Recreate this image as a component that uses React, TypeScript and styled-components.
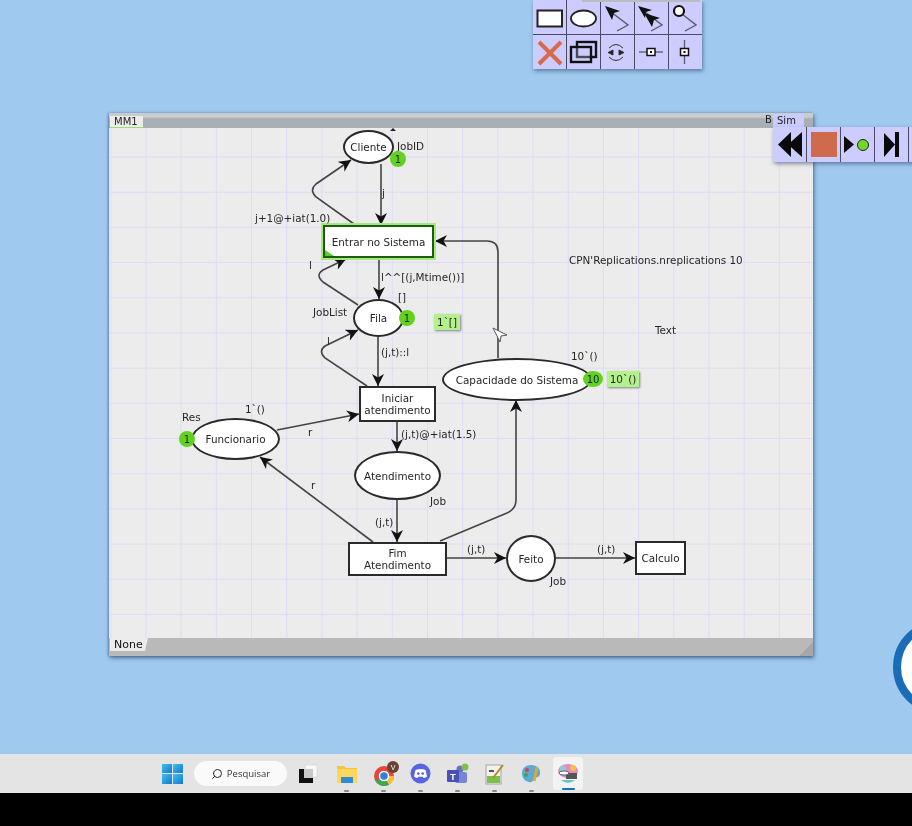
import React from "react";
import styled, { createGlobalStyle } from "styled-components";
import { Search } from "lucide-react";

// net coordinates below are screen pixels, the canvas starts here
const CANVAS_X = 109;
const CANVAS_Y = 128;

const GlobalStyle = createGlobalStyle`
  html, body { margin: 0; padding: 0; background: #000; }
  body { font-family: "DejaVu Sans", sans-serif; overflow: hidden; }
`;

const Screen = styled.div`
  width: 912px;
  height: 826px;
  display: flex;
  flex-direction: column;
  overflow: hidden;
  filter: blur(0.45px);
`;

const Desktop = styled.div`
  position: relative;
  flex: 1;
  background: #9fc9ef;
  overflow: hidden;
`;

const Palette = styled.div`
  position: absolute;
  background: #4a4a66;
  box-shadow: 1px 2px 4px rgba(40, 60, 100, 0.55);
`;

const ToolGrid = styled(Palette)`
  left: 533px;
  top: 0;
  display: grid;
  grid-template-columns: repeat(5, 33px);
  grid-template-rows: repeat(2, 34px);
  gap: 1px;
`;

const TopStrip = styled.div`
  position: absolute;
  left: 582px;
  top: 0;
  width: 118px;
  height: 2px;
  background: #b9bcc0;
`;

const Cell = styled.div`
  background: #ccccff;
  display: flex;
  svg {
    display: block;
  }
`;

const SimPalette = styled.div`
  position: absolute;
  left: 773px;
  top: 114px;
  z-index: 2;
`;

const SimTab = styled.div`
  width: 31px;
  height: 13px;
  background: #ccccff;
  border-radius: 2px 2px 0 0;
  font-size: 10px;
  line-height: 14px;
  padding-left: 4px;
  box-sizing: border-box;
  color: #222;
`;

const SimRow = styled(Palette)`
  position: static;
  display: grid;
  grid-template-columns: repeat(5, 33px);
  grid-template-rows: 35px;
  gap: 1px;
`;

const Window = styled.div`
  position: absolute;
  left: ${CANVAS_X}px;
  top: 113px;
  width: 704px;
  height: 543px;
  display: flex;
  flex-direction: column;
  box-shadow: 1px 2px 4px rgba(30, 60, 100, 0.65), -1px 0 2px rgba(30, 60, 100, 0.35);
`;

const TitleBar = styled.div`
  height: 15px;
  background: linear-gradient(#c8ccce 0 4px, #a7afb5 6px, #a9b0b5);
  display: flex;
  align-items: flex-end;
  padding-left: 1px;
  position: relative;
`;

const PageTab = styled.div`
  width: 33px;
  height: 12px;
  background: #ececec;
  border-bottom: 1px solid #9be06a;
  box-sizing: border-box;
  font-size: 10px;
  line-height: 11px;
  padding-left: 4px;
  color: #222;
`;

const BinderLetter = styled.span`
  position: absolute;
  left: 656px;
  top: 1px;
  font-size: 10px;
  color: #222;
`;

const Canvas = styled.div`
  position: relative;
  flex: 1;
  background-color: #ececec;
  background-image: linear-gradient(#dcdcf7 0 1.2px, transparent 1.2px),
    linear-gradient(90deg, #dcdcf7 0 1.2px, transparent 1.2px);
  background-size: 35.2px 35.2px;
  background-position: 36.5px 28.5px;
`;

const BottomBar = styled.div`
  height: 18px;
  background: #b9b9b9;
  display: flex;
  padding-left: 1px;
  position: relative;
  z-index: 1;
`;

const StatusTab = styled.div`
  width: 38px;
  height: 13px;
  background: #ececec;
  font-size: 11px;
  line-height: 14px;
  padding-left: 4px;
  box-sizing: border-box;
  color: #111;
  clip-path: polygon(0 0, 100% 0, 92% 100%, 0 100%);
`;

const ResizeCorner = styled.div`
  position: absolute;
  right: 0;
  bottom: 0;
  width: 14px;
  height: 14px;
  background: #a6a6a6;
  clip-path: polygon(100% 0, 100% 100%, 0 100%);
`;

const ArcLayer = styled.svg`
  position: absolute;
  left: 0;
  top: 0;
  z-index: 1;
  pointer-events: none;
`;

const Layer = styled.div`
  position: absolute;
  inset: 0;
  font-size: 10.4px;
  color: #262626;
`;

const Place = styled.div<{ $x: number; $y: number; $w: number; $h: number }>`
  position: absolute;
  left: ${(p) => p.$x - CANVAS_X}px;
  top: ${(p) => p.$y - CANVAS_Y}px;
  width: ${(p) => p.$w - p.$x}px;
  height: ${(p) => p.$h - p.$y}px;
  box-sizing: border-box;
  border-radius: 50%;
  border: 2px solid #2a2a2a;
  background: #fff;
  display: flex;
  align-items: center;
  justify-content: center;
  z-index: 2;
`;

const Transition = styled(Place)<{ $active?: boolean }>`
  border-radius: 0;
  text-align: center;
  line-height: 12px;
  border-color: ${(p) => (p.$active ? "#1f5c12" : "#2a2a2a")};
  box-shadow: ${(p) => (p.$active ? "0 0 0 2px #a4ea7c" : "none")};
`;

const EnabledCorner = styled.span`
  position: absolute;
  left: 0;
  bottom: 0;
  width: 9px;
  height: 6px;
  background: #5fc936;
  clip-path: polygon(0 0, 100% 100%, 0 100%);
`;

const Token = styled.div<{ $cx: number; $cy: number; $w?: number }>`
  position: absolute;
  left: ${(p) => p.$cx - CANVAS_X - (p.$w ?? 16) / 2}px;
  top: ${(p) => p.$cy - CANVAS_Y - 8}px;
  width: ${(p) => p.$w ?? 16}px;
  height: 16px;
  border-radius: 50%;
  background: #63d21f;
  display: flex;
  align-items: center;
  justify-content: center;
  font-size: 10px;
  color: #123;
  z-index: 3;
`;

const Marking = styled.div<{ $x: number; $y: number; $w: number }>`
  position: absolute;
  left: ${(p) => p.$x - CANVAS_X}px;
  top: ${(p) => p.$y - CANVAS_Y}px;
  width: ${(p) => p.$w}px;
  height: 16px;
  background: #b4f08c;
  box-shadow: 1px 1px 2px rgba(0, 0, 0, 0.45);
  display: flex;
  align-items: center;
  justify-content: center;
  z-index: 3;
`;

const Label = styled.span<{ $x: number; $y: number }>`
  position: absolute;
  left: ${(p) => p.$x - CANVAS_X}px;
  top: ${(p) => p.$y - CANVAS_Y - 7}px;
  line-height: 14px;
  white-space: nowrap;
  z-index: 2;
`;

const RingBadge = styled.div`
  position: absolute;
  left: 893px;
  top: 620px;
  width: 94px;
  height: 94px;
  box-sizing: border-box;
  border-radius: 50%;
  border: 8px solid #1b6cb6;
  background: #fff;
`;

const Taskbar = styled.div`
  height: 39px;
  background: #e4e4e4;
  display: flex;
  align-items: center;
  padding-left: 162px;
`;

const TaskIcons = styled.div`
  display: flex;
  align-items: center;
  margin-left: 2px;
`;

const TaskIcon = styled.div<{ $active?: boolean }>`
  position: relative;
  width: ${(p) => (p.$active ? 30 : 37)}px;
  height: ${(p) => (p.$active ? 33 : 39)}px;
  margin-left: ${(p) => (p.$active ? 3 : 0)}px;
  display: flex;
  align-items: center;
  justify-content: center;
  flex: none;
  border-radius: 3px;
  background: ${(p) => (p.$active ? "#f3f3f3" : "transparent")};
`;

const RunDot = styled.span<{ $active?: boolean }>`
  position: absolute;
  left: 50%;
  bottom: ${(p) => (p.$active ? 0 : 1)}px;
  width: ${(p) => (p.$active ? 13 : 5)}px;
  height: 2px;
  margin-left: ${(p) => (p.$active ? -6.5 : -2.5)}px;
  border-radius: 1px;
  background: ${(p) => (p.$active ? "#1173c4" : "#8a8a8a")};
`;

const StartButton = styled.div`
  width: 21px;
  height: 20px;
  display: grid;
  grid-template-columns: 1fr 1fr;
  gap: 1px;
  flex: none;
  margin-right: 11px;
  span {
    background: linear-gradient(135deg, #3fc0ee, #1579c9);
  }
`;

const SearchPill = styled.div`
  width: 93px;
  height: 25px;
  border-radius: 13px;
  background: #fafafa;
  display: flex;
  align-items: center;
  justify-content: center;
  gap: 4px;
  font-size: 9.5px;
  color: #333;
  flex: none;
  margin-right: 2px;
  font-family: "Open Sans", sans-serif;
  svg {
    transform: scaleX(-1);
  }
`;

const BlackBand = styled.div`
  height: 33px;
  background: #000;
`;

const arcs = [
  "M381 164 L381 225",
  "M354 224 L316 197 Q309 190 316 184 L351 160",
  "M379 258 L379 299",
  "M358 305 L323 282 Q315 275 323 270 L346 259",
  "M367 386 L325 358 Q318 351 325 346 L358 330",
  "M378 337 L378 386",
  "M397 422 L397 451",
  "M397 500 L397 542",
  "M277 430 L359 414",
  "M373 542 L260 457",
  "M447 558 L506 558",
  "M556 558 L635 558",
  "M440 541 L507 513 Q516 509 516 500 L516 400",
  "M498 358 L498 252 Q498 241 487 241 L435 241",
];

const Arcs = () => (
  <ArcLayer width={704} height={510} viewBox={`${CANVAS_X} ${CANVAS_Y} 704 510`}>
    <defs>
      <marker
        id="head"
        markerUnits="userSpaceOnUse"
        markerWidth={13}
        markerHeight={12}
        refX={12}
        refY={6}
        orient="auto"
      >
        <path d="M12 6 L0 0 L3.5 6 L0 12 Z" fill="#111" />
      </marker>
    </defs>
    {arcs.map((d) => (
      <path key={d} d={d} fill="none" stroke="#444" strokeWidth={1.6} markerEnd="url(#head)" />
    ))}
    <path d="M493 328 L507 335 L501 336 L500 342 Z" fill="#fff" stroke="#555" strokeWidth={1} />
    <path d="M390 131 L393 128 L396 131 Z" fill="#222" />
  </ArcLayer>
);

const labels: [number, number, string][] = [
  [397, 146, "JobID"],
  [382, 193, "j"],
  [255, 218, "j+1@+iat(1.0)"],
  [309, 265, "l"],
  [381, 277, "l^^[(j,Mtime())]"],
  [398, 297, "[]"],
  [313, 312, "JobList"],
  [327, 341, "l"],
  [381, 352, "(j,t)::l"],
  [245, 409, "1`()"],
  [182, 417, "Res"],
  [308, 432, "r"],
  [311, 485, "r"],
  [401, 434, "(j,t)@+iat(1.5)"],
  [430, 501, "Job"],
  [375, 522, "(j,t)"],
  [467, 549, "(j,t)"],
  [550, 581, "Job"],
  [597, 549, "(j,t)"],
  [569, 260, "CPN'Replications.nreplications 10"],
  [655, 330, "Text"],
  [571, 356, "10`()"],
];

const Net = () => (
  <Layer>
    <Arcs />
    <Place $x={343} $y={130} $w={394} $h={164}>Cliente</Place>
    <Place $x={353} $y={299} $w={404} $h={337}>Fila</Place>
    <Place $x={191} $y={418} $w={280} $h={460}>Funcionario</Place>
    <Place $x={354} $y={451} $w={441} $h={500}>Atendimento</Place>
    <Place $x={442} $y={358} $w={592} $h={401}>Capacidade do Sistema</Place>
    <Place $x={506} $y={535} $w={556} $h={582}>Feito</Place>
    <Transition $x={323} $y={225} $w={434} $h={258} $active>
      <EnabledCorner />
      Entrar no Sistema
    </Transition>
    <Transition $x={359} $y={386} $w={436} $h={422}>
      Iniciar
      <br />
      atendimento
    </Transition>
    <Transition $x={348} $y={542} $w={447} $h={576}>
      Fim
      <br />
      Atendimento
    </Transition>
    <Transition $x={635} $y={541} $w={686} $h={575}>Calculo</Transition>
    <Token $cx={398} $cy={159}>1</Token>
    <Token $cx={407} $cy={318}>1</Token>
    <Token $cx={187} $cy={439}>1</Token>
    <Token $cx={593} $cy={379} $w={20}>10</Token>
    <Marking $x={434} $y={314} $w={26}>1`[]</Marking>
    <Marking $x={607} $y={371} $w={32}>10`()</Marking>
    {labels.map(([x, y, text]) => (
      <Label key={`${x}-${y}`} $x={x} $y={y}>
        {text}
      </Label>
    ))}
  </Layer>
);

const Icon = ({ children }: { children: React.ReactNode }) => (
  <Cell>
    <svg width={33} height={34} viewBox="0 0 33 34">
      {children}
    </svg>
  </Cell>
);

const arrowTail = "#5a5a6a";

const tools = [
  <rect key="r" x={4.5} y={10.5} width={24.5} height={16} fill="#fff" stroke="#222" strokeWidth={2} />,
  <ellipse key="e" cx={16.5} cy={18.5} rx={12.5} ry={8} fill="#fff" stroke="#222" strokeWidth={1.8} />,
  <g key="a">
    <path d="M10 12 L27 25 L16 31" fill="none" stroke={arrowTail} strokeWidth={1.4} />
    <path d="M4 6 L19 11 L13 13 L11 20 Z" fill="#111" />
  </g>,
  <g key="aa">
    <path d="M10 12 L27 25 L16 31" fill="none" stroke={arrowTail} strokeWidth={1.4} />
    <path d="M3 6 L17 10 L11 12 L10 18 Z" fill="#111" />
    <path d="M9 13 L25 18 L19 20 L17 27 Z" fill="#111" />
  </g>,
  <g key="o">
    <path d="M13 14 L27 25 L16 31" fill="none" stroke={arrowTail} strokeWidth={1.4} />
    <circle cx={10} cy={11} r={5} fill="#fff" stroke="#111" strokeWidth={2.2} />
  </g>,
  <path key="x" d="M6 7 L28 29 M28 7 L6 29" stroke="#d8694a" strokeWidth={4} fill="none" />,
  <g key="g" fill="none" stroke="#111" strokeWidth={2.4}>
    <rect x={10} y={7} width={19} height={15} />
    <rect x={4} y={12} width={20} height={15} fill="#ccccff" fillOpacity={0.3} />
  </g>,
  <g key="c" fill="none" stroke="#333" strokeWidth={1}>
    <path d="M8 13 Q15 6 22 13" />
    <path d="M8 22 Q15 29 22 22" />
    <path d="M7 17.5 L12 15 L12 20 Z" fill="#222" />
    <path d="M23 17.5 L18 15 L18 20 Z" fill="#222" />
  </g>,
  <g key="h">
    <path d="M4 17 L28 17" stroke={arrowTail} strokeWidth={1.3} />
    <rect x={12} y={13.5} width={8} height={7} fill="#fff" stroke="#111" strokeWidth={1.5} />
    <rect x={15} y={16} width={2} height={2} fill="#111" />
  </g>,
  <g key="v">
    <path d="M15.5 5 L15.5 29" stroke={arrowTail} strokeWidth={1.3} />
    <rect x={11.5} y={13.5} width={8} height={7} fill="#fff" stroke="#111" strokeWidth={1.5} />
    <rect x={14.5} y={16} width={2} height={2} fill="#111" />
  </g>,
];

const simTools = [
  <g key="rw" fill="#0a0a0a">
    <path d="M5 17.5 L18 5 L18 30 Z" />
    <path d="M15 17.5 L29 5 L29 30 Z" />
  </g>,
  <rect key="st" x={4} y={5} width={26} height={25} fill="#cf6a4c" />,
  <g key="pl">
    <path d="M3 9 L13 17.5 L3 26 Z" fill="#0a0a0a" />
    <circle cx={22} cy={18} r={5.5} fill="#6fd92a" stroke="#222" strokeWidth={1} />
  </g>,
  <g key="sx" fill="#0a0a0a">
    <path d="M9 6 L20 17.5 L9 30 Z" />
    <rect x={20} y={5} width={4} height={25} />
  </g>,
  <g key="end" />,
];

const SimIcon = ({ children }: { children: React.ReactNode }) => (
  <Cell>
    <svg width={33} height={35} viewBox="0 0 33 35">
      {children}
    </svg>
  </Cell>
);

const TaskView = () => (
  <svg width={20} height={20} viewBox="0 0 20 20">
    <rect x={7} y={1} width={12} height={12} fill="#f8f8f8" stroke="#ccc" strokeWidth={0.5} />
    <rect x={1} y={5} width={14} height={14} fill="#111" />
    <rect x={6} y={5} width={9} height={9} fill="#c9c9c9" />
  </svg>
);

const Folder = () => (
  <svg width={22} height={20} viewBox="0 0 22 20">
    <path d="M1 2 H8 L10 4 H21 V19 H1 Z" fill="#f5c33b" />
    <rect x={1} y={5} width={20} height={14} fill="#fcd75a" />
    <rect x={5} y={13} width={12} height={6} fill="#2d8ed6" />
  </svg>
);

const Chrome = () => (
  <svg width={36} height={26} viewBox="-8 0 36 26">
    <circle cx={10} cy={15} r={10} fill="#e5483a" />
    <path d="M10 15 L1.3 20 A10 10 0 0 0 15 23.7 Z" fill="#3aa757" />
    <path d="M10 15 L15 23.7 A10 10 0 0 0 20 15 Z" fill="#f9c433" />
    <circle cx={10} cy={15} r={4.5} fill="#2f7de1" stroke="#fff" strokeWidth={1.5} />
    <circle cx={19} cy={6} r={6} fill="#6a4232" />
    <text x={19} y={8.6} fontSize={7} fill="#fff" textAnchor="middle" fontFamily="Liberation Sans">
      V
    </text>
  </svg>
);

const Discord = () => (
  <svg width={21} height={21} viewBox="0 0 21 21">
    <circle cx={10.5} cy={10.5} r={10} fill="#5865e0" />
    <path d="M5.5 7 Q10.5 5 15.5 7 L17 13.5 Q15 15 13.5 15 L12.8 13.8 H8.2 L7.5 15 Q6 15 4 13.5 Z" fill="#fff" />
    <circle cx={8.3} cy={10.6} r={1.3} fill="#5865e0" />
    <circle cx={12.7} cy={10.6} r={1.3} fill="#5865e0" />
  </svg>
);

const Teams = () => (
  <svg width={24} height={22} viewBox="0 0 24 22">
    <circle cx={14} cy={6} r={3.5} fill="#6a6fc9" />
    <rect x={9} y={9} width={12} height={11} rx={2} fill="#7b83d6" />
    <rect x={1} y={7} width={12} height={12} rx={1} fill="#4a52b0" />
    <text x={7} y={16.5} fontSize={9.5} fill="#fff" textAnchor="middle" fontFamily="Liberation Sans" fontWeight={700}>
      T
    </text>
    <circle cx={19} cy={4} r={3.5} fill="#7fbf4d" />
  </svg>
);

const Notes = () => (
  <svg width={20} height={22} viewBox="0 0 20 22">
    <rect x={1} y={2} width={15} height={19} fill="#f2f2ea" stroke="#888" strokeWidth={0.7} />
    <rect x={2} y={13} width={13} height={7} fill="#7cc04a" />
    <rect x={4} y={7} width={5} height={2} fill="#555" />
    <path d="M8 15 L18 2" stroke="#b58a2c" strokeWidth={2} />
  </svg>
);

const PaintPalette = () => (
  <svg width={21} height={21} viewBox="0 0 21 21">
    <path d="M10 2 C16 2 20 6 19 11 C18 15 15 14 13 15 C12 17 12 20 8 19 C3 18 1 14 1 10 C1 5 5 2 10 2 Z" fill="#5aa9d6" />
    <circle cx={6} cy={7} r={2} fill="#d2453a" />
    <circle cx={5} cy={12} r={2} fill="#4aa04a" />
    <path d="M16 4 L13 18" stroke="#e0a82e" strokeWidth={3} />
  </svg>
);

const CpnTools = () => (
  <svg width={22} height={24} viewBox="0 0 22 24">
    <ellipse cx={11} cy={9} rx={10} ry={7} fill="#e88ac0" />
    <circle cx={6} cy={7} r={3} fill="#7fd0e8" />
    <circle cx={16} cy={6} r={3} fill="#f3c14a" />
    <rect x={9} y={11} width={11} height={6} fill="#555" />
    <ellipse cx={7} cy={11} rx={5} ry={2} fill="#fff" stroke="#444" strokeWidth={0.8} />
    <path d="M4 18 Q11 24 18 18" fill="#6ac3c9" />
  </svg>
);

const taskIcons = [
  <Folder key="folder" />,
  <Chrome key="chrome" />,
  <Discord key="discord" />,
  <Teams key="teams" />,
  <Notes key="notes" />,
  <PaintPalette key="paint" />,
];

export default function App() {
  return (
    <Screen>
      <GlobalStyle />
      <Desktop>
        <Window>
          <TitleBar>
            <PageTab>MM1</PageTab>
            <BinderLetter>B</BinderLetter>
          </TitleBar>
          <Canvas>
            <Net />
          </Canvas>
          <BottomBar>
            <StatusTab>None</StatusTab>
            <ResizeCorner />
          </BottomBar>
        </Window>
        <ToolGrid>
          {tools.map((t, i) => (
            <Icon key={i}>{t}</Icon>
          ))}
        </ToolGrid>
        <TopStrip />
        <SimPalette>
          <SimTab>Sim</SimTab>
          <SimRow>
            {simTools.map((t, i) => (
              <SimIcon key={i}>{t}</SimIcon>
            ))}
          </SimRow>
        </SimPalette>
        <RingBadge />
      </Desktop>
      <Taskbar>
        <StartButton>
          <span />
          <span />
          <span />
          <span />
        </StartButton>
        <SearchPill>
          <Search size={12} strokeWidth={2} color="#222" />
          Pesquisar
        </SearchPill>
        <TaskIcon>
          <TaskView />
        </TaskIcon>
        <TaskIcons>
          {taskIcons.map((icon) => (
            <TaskIcon key={icon.key}>
              {icon}
              <RunDot />
            </TaskIcon>
          ))}
          <TaskIcon $active>
            <CpnTools />
            <RunDot $active />
          </TaskIcon>
        </TaskIcons>
      </Taskbar>
      <BlackBand />
    </Screen>
  );
}
